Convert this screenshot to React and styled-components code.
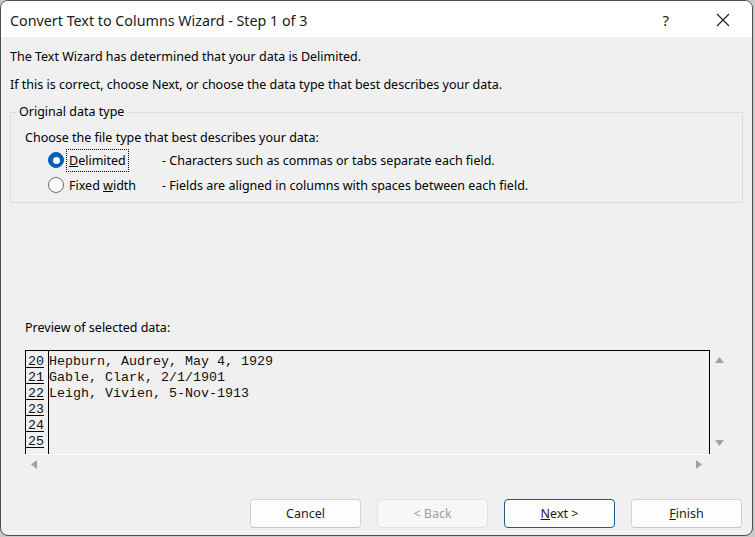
import styled, { createGlobalStyle } from 'styled-components';

const UI_FONT = "'Noto Sans', 'Open Sans', sans-serif";

const GlobalStyle = createGlobalStyle`
  html, body {
    margin: 0;
    padding: 0;
  }
  body {
    background: #c9c9c9;
    font-family: ${UI_FONT};
  }
`;

const previewRows = [
  { num: 20, text: 'Hepburn, Audrey, May 4, 1929' },
  { num: 21, text: 'Gable, Clark, 2/1/1901' },
  { num: 22, text: 'Leigh, Vivien, 5-Nov-1913' },
  { num: 23, text: '' },
  { num: 24, text: '' },
  { num: 25, text: '' },
  { num: '', text: '' },
];

const Arrow = ({ dir }) => {
  const points = {
    up: '0,6 4.5,0 9,6',
    down: '0,0 9,0 4.5,6',
    left: '6,0 6,9 0,4.5',
    right: '0,0 6,4.5 0,9',
  }[dir];
  const vertical = dir === 'up' || dir === 'down';
  return (
    <svg width={vertical ? 9 : 6} height={vertical ? 6 : 9} viewBox={vertical ? '0 0 9 6' : '0 0 6 9'}>
      <polygon points={points} fill='#a2a2a2' />
    </svg>
  );
};

const App = () => {
  return (
    <>
      <GlobalStyle />
      <Window>
        <TitleBar>
          <Title>Convert Text to Columns Wizard - Step 1 of 3</Title>
          <TitleControls>
            <HelpMark>?</HelpMark>
            <svg width='14' height='14' viewBox='0 0 14 14'>
              <path d='M1 1 L13 13 M13 1 L1 13' stroke='#1b1b1b' strokeWidth='1.1' fill='none' />
            </svg>
          </TitleControls>
        </TitleBar>

        <Body>
          <Line>The Text Wizard has determined that your data is Delimited.</Line>
          <Line $gap={12}>If this is correct, choose Next, or choose the data type that best describes your data.</Line>

          <GroupBox>
            <legend>Original data type</legend>
            <Line $gap={10} $indent={9}>Choose the file type that best describes your data:</Line>
            <RadioRow $gap={3}>
              <Radio $checked />
              <RadioLabel>
                <Focused><u>D</u>elimited</Focused>
              </RadioLabel>
              <span>- Characters such as commas or tabs separate each field.</span>
            </RadioRow>
            <RadioRow $gap={3}>
              <Radio />
              <RadioLabel>
                Fixed <u>w</u>idth
              </RadioLabel>
              <span>- Fields are aligned in columns with spaces between each field.</span>
            </RadioRow>
          </GroupBox>

          <PreviewLabel>Preview of selected data:</PreviewLabel>
          <PreviewFrame>
            <PreviewBox>
              <NumColumn>
                {previewRows.map((row, i) => (
                  <NumCell key={i}>{row.num}</NumCell>
                ))}
              </NumColumn>
              <DataColumn>
                {previewRows.map((row, i) => (
                  <DataLine key={i}>{row.text}</DataLine>
                ))}
              </DataColumn>
            </PreviewBox>
            <VScroll>
              <Arrow dir='up' />
              <Arrow dir='down' />
            </VScroll>
            <HScroll>
              <Arrow dir='left' />
              <Arrow dir='right' />
            </HScroll>
          </PreviewFrame>

          <ButtonRow>
            <Button>Cancel</Button>
            <Button disabled>&lt; Back</Button>
            <Button $primary>
              <u>N</u>ext &gt;
            </Button>
            <Button>
              <u>F</u>inish
            </Button>
          </ButtonRow>
        </Body>
      </Window>
    </>
  );
};

const Window = styled.div`
  width: 753px;
  height: 536px;
  box-sizing: border-box;
  border: 1px solid #4d4d4d;
  border-radius: 8px;
  overflow: hidden;
  background: #f0f0f0;
  display: flex;
  flex-direction: column;
  font-family: ${UI_FONT};
  font-size: 12.5px;
  color: #000;
`;

const TitleBar = styled.div`
  height: 36px;
  flex-shrink: 0;
  background: #fff;
  display: flex;
  align-items: center;
  padding: 0 22px 0 9px;
`;

const Title = styled.div`
  flex: 1;
  font-size: 14.3px;
  color: #1a1a1a;
  padding-top: 2px;
`;

const TitleControls = styled.div`
  display: flex;
  align-items: center;
  gap: 47px;
  padding-top: 2px;
`;

const HelpMark = styled.span`
  font-size: 15px;
  color: #1a1a1a;
`;

const Body = styled.div`
  flex: 1;
  display: flex;
  flex-direction: column;
  padding: 12px 9px 0 9px;
`;

const Line = styled.div`
  line-height: 16px;
  margin-top: ${(p) => p.$gap || 0}px;
  padding-left: ${(p) => p.$indent || 0}px;
  white-space: nowrap;
`;

const GroupBox = styled.fieldset`
  margin: 11px 0 0 0;
  padding: 0 0 6px 5px;
  border: 1px solid #dcdcdc;

  legend {
    padding: 0 3px;
    line-height: 16px;
  }
`;

const RadioRow = styled.div`
  display: flex;
  align-items: center;
  height: 22px;
  margin-top: ${(p) => p.$gap || 0}px;
  padding-left: 32px;
  white-space: nowrap;
`;

const Radio = styled.span`
  width: 16px;
  height: 16px;
  box-sizing: border-box;
  border-radius: 50%;
  flex-shrink: 0;
  margin-right: 5px;
  background: ${(p) => (p.$checked ? '#005fb8' : '#fdfdfd')};
  border: 1px solid ${(p) => (p.$checked ? '#005fb8' : '#6b6b6b')};
  display: flex;
  align-items: center;
  justify-content: center;

  &::after {
    content: '';
    display: ${(p) => (p.$checked ? 'block' : 'none')};
    width: 7px;
    height: 7px;
    border-radius: 50%;
    background: #fff;
  }
`;

const RadioLabel = styled.span`
  width: 93px;
  flex-shrink: 0;
`;

const Focused = styled.span`
  outline: 1px dotted #000;
  outline-offset: 2px;
`;

const PreviewLabel = styled.div`
  line-height: 16px;
  margin-top: 117px;
  padding-left: 15px;
`;

const PreviewFrame = styled.div`
  display: grid;
  grid-template-columns: 685px 19px;
  grid-template-rows: 104px 19px;
  margin: 14px 0 0 15px;
`;

const PreviewBox = styled.div`
  box-sizing: border-box;
  border: 1px solid #000;
  border-bottom: none;
  padding-top: 1px;
  display: flex;
  overflow: hidden;
  font-family: 'Liberation Mono', 'Courier New', monospace;
  font-size: 13.33px;
  line-height: 15px;
  color: #111;
`;

const NumColumn = styled.div`
  width: 22px;
  flex-shrink: 0;
  border-right: 1px solid #000;
  margin-top: -1px;
  padding-top: 1px;
`;

const NumCell = styled.div`
  width: 18px;
  height: 13px;
  padding-top: 2px;
  border-bottom: 1px solid #000;
  text-align: right;
`;

const DataColumn = styled.div`
  flex: 1;
`;

const DataLine = styled.div`
  height: 14px;
  padding-top: 2px;
  white-space: pre;
`;

const VScroll = styled.div`
  display: flex;
  flex-direction: column;
  align-items: center;
  justify-content: space-between;
  padding: 7px 0 8px;
`;

const HScroll = styled.div`
  border-top: 1px solid #fdfdfd;
  display: flex;
  align-items: center;
  justify-content: space-between;
  padding: 0 8px 0 6px;
`;

const ButtonRow = styled.div`
  display: flex;
  justify-content: flex-end;
  gap: 16px;
  margin: 26px 1px 0 0;
`;

const Button = styled.button`
  width: 111px;
  height: 29px;
  box-sizing: border-box;
  border-radius: 4px;
  font-family: ${UI_FONT};
  font-size: 12.5px;
  background: ${(p) => (p.disabled ? '#f7f7f7' : '#fdfdfd')};
  color: ${(p) => (p.disabled ? '#9e9e9e' : '#1b1b1b')};
  border: 1px solid ${(p) => (p.$primary ? '#1b5d8c' : p.disabled ? '#e2e2e2' : '#d2d2d2')};
  border-bottom-color: ${(p) => (p.$primary ? '#1b5d8c' : p.disabled ? '#e2e2e2' : '#c4c4c4')};
  padding: 0;
`;

export default App;
